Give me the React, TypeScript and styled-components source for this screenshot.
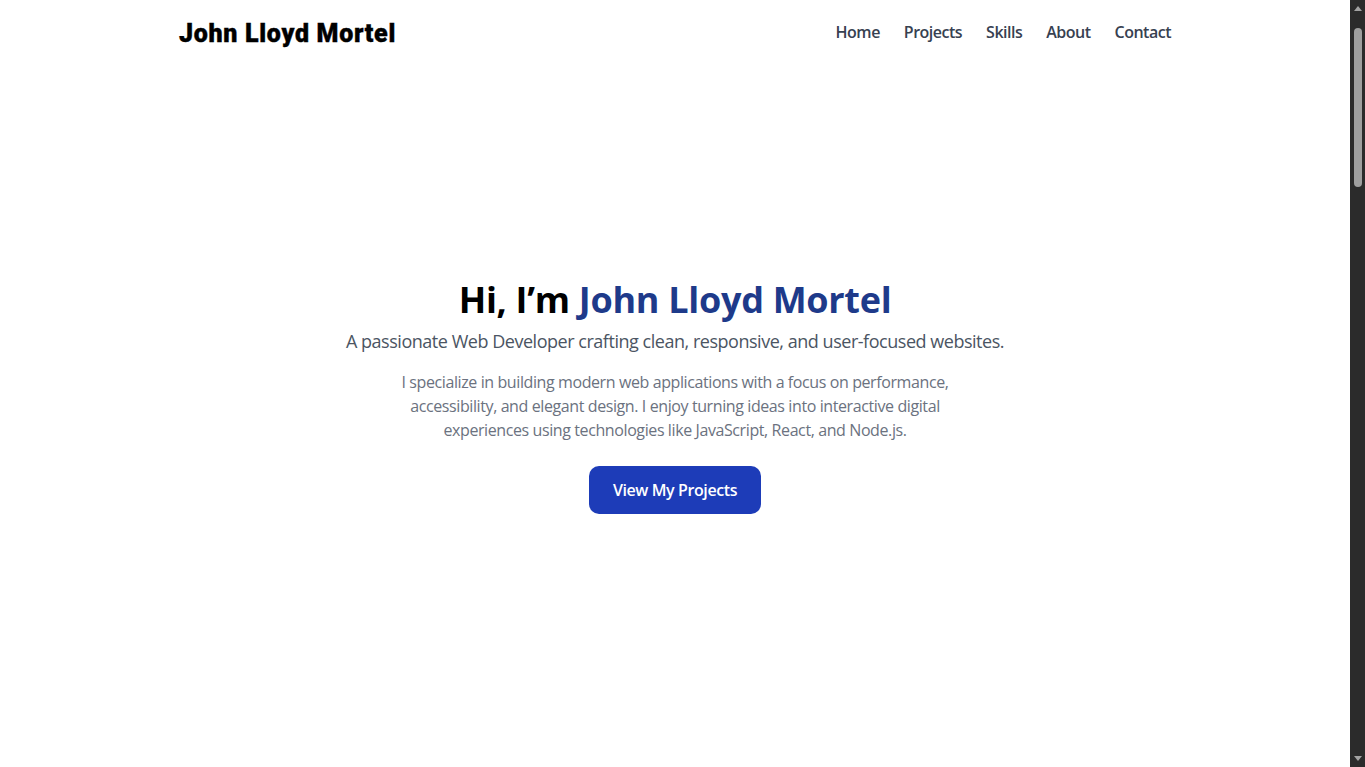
import React from "react";
import styled, { createGlobalStyle } from "styled-components";

const GlobalStyle = createGlobalStyle`
  html, body {
    margin: 0;
    background: #ffffff;
  }
  body {
    color: #111827;
    font-family: "Segoe UI", "Open Sans", "Noto Sans", sans-serif;
    overflow: hidden;
  }
  * { box-sizing: border-box; }
`;

const Shell = styled.div`
  display: flex;
  height: 100vh;
  overflow: hidden;
`;

const Main = styled.main`
  flex: 1;
  min-width: 0;
  display: flex;
  flex-direction: column;
`;

const Header = styled.header`
  background: #ffffff;
`;

const HeaderInner = styled.div`
  max-width: 1024px;
  margin: 0 auto;
  padding: 16px;
  display: flex;
  align-items: center;
  justify-content: space-between;
`;

const Logo = styled.a`
  font-family: "Roboto", "Lato", sans-serif;
  font-weight: 900;
  font-size: 25px;
  line-height: 36px;
  letter-spacing: 0.7px;
  -webkit-text-stroke: 0.4px #000000;
  color: #000000;
  text-decoration: none;
`;

const NavList = styled.nav`
  display: flex;
  gap: 24px;
  margin-top: -4px;
`;

const NavLink = styled.a`
  font-size: 16px;
  font-weight: 600;
  line-height: 24px;
  letter-spacing: -0.5px;
  color: #374151;
  text-decoration: none;
`;

const Hero = styled.section`
  flex: 1;
  padding: 0 16px 42px;
  display: flex;
  flex-direction: column;
  align-items: center;
  justify-content: center;
  text-align: center;
`;

const Title = styled.h1`
  margin: 0;
  font-size: 36px;
  line-height: 40px;
  font-weight: 700;
  letter-spacing: -0.3px;
  color: #000000;
`;

const Accent = styled.span`
  color: #1e3a8a;
`;

const Subtitle = styled.p`
  margin: 7px 0 0;
  font-size: 18px;
  line-height: 28px;
  letter-spacing: -0.47px;
  color: #4b5563;
`;

const Intro = styled.p`
  margin: 15px 0 0;
  max-width: 576px;
  font-size: 16px;
  line-height: 24px;
  letter-spacing: -0.4px;
  color: #6b7280;
`;

const PrimaryButton = styled.a`
  margin-top: 24px;
  display: inline-flex;
  align-items: center;
  justify-content: center;
  height: 48px;
  padding: 0 24px;
  border-radius: 10px;
  background: #1d3cb8;
  color: #ffffff;
  font-size: 16px;
  font-weight: 600;
  letter-spacing: -0.4px;
  text-decoration: none;
`;

const ScrollRail = styled.div`
  width: 15px;
  flex: none;
  background: #2b2b2b;
  display: flex;
  flex-direction: column;
  align-items: center;
`;

const ArrowBox = styled.div`
  height: 17px;
  width: 15px;
  display: flex;
  align-items: center;
  justify-content: center;
`;

const Triangle = styled.div<{ $down?: boolean }>`
  width: 0;
  height: 0;
  border-left: 4px solid transparent;
  border-right: 4px solid transparent;
  ${(p) =>
    p.$down
      ? "border-top: 5px solid #a3a3a3;"
      : "border-bottom: 5px solid #a3a3a3;"}
`;

const Thumb = styled.div`
  margin-top: 11px;
  width: 8px;
  height: 159px;
  border-radius: 4px;
  background: #9f9f9f;
`;

const RailSpacer = styled.div`
  flex: 1;
`;

const links = ["Home", "Projects", "Skills", "About", "Contact"];

export default function App() {
  return (
    <>
      <GlobalStyle />
      <Shell>
        <Main>
          <Header>
            <HeaderInner>
              <Logo href="#home">John Lloyd Mortel</Logo>
              <NavList>
                {links.map((l) => (
                  <NavLink key={l} href={`#${l.toLowerCase()}`}>
                    {l}
                  </NavLink>
                ))}
              </NavList>
            </HeaderInner>
          </Header>
          <Hero id="home">
            <Title>
              Hi, I’m <Accent>John Lloyd Mortel</Accent>
            </Title>
            <Subtitle>
              A passionate Web Developer crafting clean, responsive, and user-focused websites.
            </Subtitle>
            <Intro>
              I specialize in building modern web applications with a focus on performance,
              accessibility, and elegant design. I enjoy turning ideas into interactive digital
              experiences using technologies like JavaScript, React, and Node.js.
            </Intro>
            <PrimaryButton href="#projects">View My Projects</PrimaryButton>
          </Hero>
        </Main>
        <ScrollRail aria-hidden="true">
          <ArrowBox>
            <Triangle />
          </ArrowBox>
          <Thumb />
          <RailSpacer />
          <ArrowBox>
            <Triangle $down />
          </ArrowBox>
        </ScrollRail>
      </Shell>
    </>
  );
}
